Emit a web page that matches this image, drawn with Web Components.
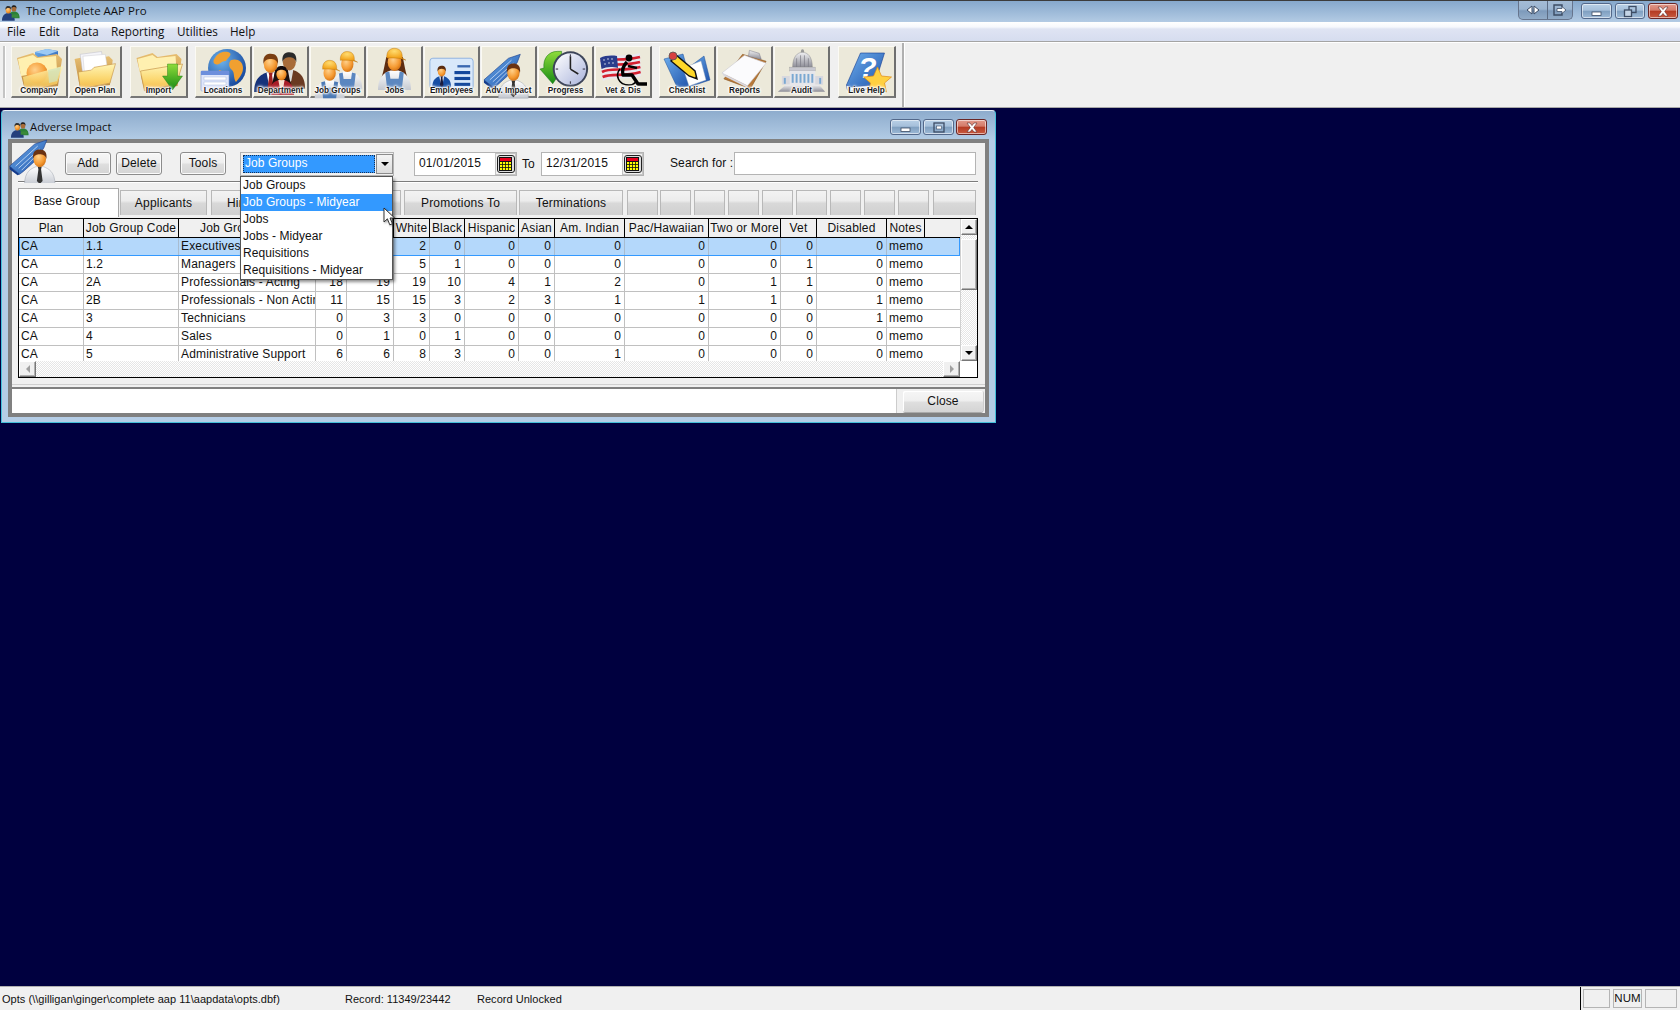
<!DOCTYPE html>
<html><head><meta charset="utf-8"><title>The Complete AAP Pro</title>
<style>
html,body{margin:0;padding:0;width:1680px;height:1010px;overflow:hidden;background:#000040}
body{display:flex;flex-direction:column;font:12px "Liberation Sans",Arial,sans-serif;color:#111}
</style></head><body>
<aap-titlebar></aap-titlebar>
<aap-menubar></aap-menubar>
<aap-toolbar>
  <tool-button label="Company" icon="company" style="width:57px;margin-left:11px"></tool-button>
  <tool-button label="Open Plan" icon="open" style="width:53px;margin-left:1px"></tool-button>
  <tool-button label="Import" icon="import" style="width:58px;margin-left:8px"></tool-button>
  <tool-button label="Locations" icon="locations" style="width:57px;margin-left:7px"></tool-button>
  <tool-button label="Department" icon="department" style="width:56px;margin-left:1px"></tool-button>
  <tool-button label="Job Groups" icon="jobgroups" style="width:56px;margin-left:1px"></tool-button>
  <tool-button label="Jobs" icon="jobs" style="width:56px;margin-left:1px"></tool-button>
  <tool-button label="Employees" icon="employees" style="width:56px;margin-left:1px"></tool-button>
  <tool-button label="Adv. Impact" icon="adv" style="width:56px;margin-left:1px"></tool-button>
  <tool-button label="Progress" icon="progress" style="width:56px;margin-left:1px"></tool-button>
  <tool-button label="Vet &amp; Dis" icon="vet" style="width:57px;margin-left:1px"></tool-button>
  <tool-button label="Checklist" icon="checklist" style="width:57px;margin-left:7px"></tool-button>
  <tool-button label="Reports" icon="reports" style="width:56px;margin-left:1px"></tool-button>
  <tool-button label="Audit" icon="audit" style="width:56px;margin-left:1px"></tool-button>
  <tool-button label="Live Help" icon="help" style="width:58px;margin-left:8px"></tool-button>
</aap-toolbar>
<aap-desktop>
  <aap-window></aap-window>
</aap-desktop>
<aap-statusbar></aap-statusbar>

<script>
const DEFS=`<defs>
<linearGradient id="y" x1="0" y1="0" x2="0" y2="1"><stop offset="0" stop-color="#fff6b8"/><stop offset=".6" stop-color="#fbd66e"/><stop offset="1" stop-color="#f2b84a"/></linearGradient>
<linearGradient id="t" x1="0" y1="0" x2="0" y2="1"><stop offset="0" stop-color="#e8bf72"/><stop offset="1" stop-color="#b98538"/></linearGradient>
<radialGradient id="s" cx=".4" cy=".35" r=".75"><stop offset="0" stop-color="#ffd08a"/><stop offset=".6" stop-color="#f59a32"/><stop offset="1" stop-color="#c8660c"/></radialGradient>
<radialGradient id="h" cx=".4" cy=".25" r=".9"><stop offset="0" stop-color="#ffdc70"/><stop offset=".6" stop-color="#f3a51e"/><stop offset="1" stop-color="#c97808"/></radialGradient>
<linearGradient id="b" x1="0" y1="0" x2="1" y2="1"><stop offset="0" stop-color="#6fb0ee"/><stop offset="1" stop-color="#1c4fa8"/></linearGradient>
<linearGradient id="g" x1="0" y1="0" x2="0" y2="1"><stop offset="0" stop-color="#8fdc3a"/><stop offset="1" stop-color="#168a14"/></linearGradient>
<radialGradient id="w" cx=".35" cy=".3" r=".8"><stop offset="0" stop-color="#6eb4ec"/><stop offset="1" stop-color="#0f3f96"/></radialGradient>
<linearGradient id="m" x1="0" y1="0" x2="0" y2="1"><stop offset="0" stop-color="#f0f0f2"/><stop offset="1" stop-color="#8e8e98"/></linearGradient>
<linearGradient id="c" x1="0" y1="0" x2="1" y2="1"><stop offset="0" stop-color="#ffffff"/><stop offset="1" stop-color="#aab4dc"/></linearGradient>
<linearGradient id="w2" x1="0" y1="0" x2="0" y2="1"><stop offset="0" stop-color="#fff"/><stop offset="1" stop-color="#c4c8d0"/></linearGradient>
</defs>`;
function folder(){return `<path d="M6 12 L22 7 L27 11 L46 8 L51 13 L47 40 L14 45 Z" fill="url(#t)"/>
<path d="M7 13 L22 9 L26 12 L45 10 L46 24 L10 30 Z" fill="#fff0b0"/>`}
function front(){return `<path d="M10 25 L52 18 L46 38 L14 45 Z" fill="url(#y)" stroke="#c8964a" stroke-width=".7"/>`}
function bust(x,y,sc,o){
 const skin=o.skin||'url(#s)';
 let r=`<g transform="translate(${x} ${y}) scale(${sc})">`;
 if(o.long) r+=`<path d="M-8 -4 C-10 6 -11 12 -13 17 L13 17 C11 12 10 6 8 -4 Z" fill="${o.long}"/>`;
 r+=`<path d="M-16 28 C-16 14 -9 11 -4 9 L4 9 C9 11 16 14 16 28 Z" fill="${o.body}" stroke="${o.edge||'none'}" stroke-width=".5"/>`;
 if(o.straps) r+=`<path d="M-9 11 L-7 28 L7 28 L9 11 L5 10 L4 17 L-4 17 L-5 10 Z" fill="${o.straps}"/>`;
 if(o.shirt) r+=`<path d="M-4 9 L4 9 L2 20 L0 22 L-2 20 Z" fill="${o.shirt}"/>`;
 if(o.tie) r+=`<path d="M-2 9 L2 9 L1.4 12 L3 24 L0 27 L-3 24 L-1.4 12 Z" fill="${o.tie}"/>`;
 r+=`<ellipse cx="0" cy="1" rx="6.6" ry="8.4" fill="${skin}"/>`;
 if(o.hair) r+=`<path d="M-7 1 C-8 -8 -3 -9 0 -9 C5 -9 8 -6 7 1 C6 -3 3 -4 0 -4 C-3 -4 -6 -3 -7 1 Z" fill="${o.hair}"/>`;
 if(o.hat) r+=`<path d="M-7.5 -3 C-8 -11 -3 -12.5 0 -12.5 C5 -12.5 8 -9 7.5 -3 L11 -1 C6 -3.4 -4 -3.4 -7.5 -3 Z" fill="url(#h)" stroke="#b46e08" stroke-width=".4"/>`;
 return r+`</g>`;
}
const ICONS={
company:()=>`<path d="M24 6 L36 3 L47 5 L47 20 L36 24 L24 20 Z" fill="url(#b)"/><path d="M24 6 L36 9 L47 5 L36 3 Z" fill="#9ccaf5"/>`+folder()+`<circle cx="26" cy="27" r="10.5" fill="url(#s)" opacity=".95"/><path d="M12 31 L52 20 L46 38 L14 45 Z" fill="url(#y)" opacity=".82"/><path d="M37 24 L50 21 L46 35 L38 37 Z" fill="#cfe4c0" opacity=".7"/>`,
open:()=>`<path d="M6 12 L20 9 L24 12 L43 9 L47 13 L44 40 L12 44 Z" fill="url(#t)"/><path d="M12 7 L35 4 L38 26 L15 30 Z" fill="#f4f4f8" stroke="#b8b8c4" stroke-width=".5"/><path d="M15 9 L39 7 L42 26 L17 31 Z" fill="#fff" stroke="#c8c8d0" stroke-width=".5"/><path d="M10 26 L24 24 L27 21 L50 17 L44 38 L12 44 Z" fill="url(#y)" stroke="#c8964a" stroke-width=".7"/>`,
import:()=>folder()+front()+`<path d="M37 18 L47 18 L47 30 L52 30 L42 44 L32 30 L37 30 Z" fill="url(#g)" stroke="#146f12" stroke-width=".4"/>`,
locations:()=>`<circle cx="32" cy="22" r="19" fill="url(#w)"/><path d="M20 12 C24 5 32 5 35 7 C37 10 32 12 31 15 C27 14 24 20 20 18 C18 17 18 14 20 12 Z M36 14 C42 12 48 15 48 22 C48 28 44 32 41 36 C38 32 40 27 37 24 C34 22 33 17 36 14 Z" fill="#f0a030"/><path d="M24 24 C27 24 30 28 29 31 L23 30 Z" fill="#f0a030"/><rect x="6" y="25" width="28" height="20" rx="1" fill="#dfe6fa" stroke="#7c96cc" stroke-width=".6"/><rect x="6" y="25" width="28" height="4" fill="#6d8fdc"/><rect x="9" y="31" width="22" height="3" fill="#fff" stroke="#9fb0d6" stroke-width=".4"/><rect x="9" y="36" width="22" height="3" fill="#fff" stroke="#9fb0d6" stroke-width=".4"/>`,
department:()=>bust(37,15,1,{skin:'#a86c38',hair:'#2a2a2a',body:'#6a3a22',shirt:'#ddd'})+bust(18,17,1.05,{hair:'#7a3e12',body:'#16327a',shirt:'#fff',tie:'#a02020'})+bust(29,27,.8,{long:'#1a1010',hair:'#120a0a',body:'#a81c28',shirt:'#f6e0d0'}),
jobgroups:()=>bust(38,17,.95,{hat:1,body:'url(#w2)',straps:'#5a86c0'})+bust(20,26,.95,{hat:1,body:'url(#w2)',straps:'#4a78b4'}),
jobs:()=>bust(28,15,1.05,{long:'#5e2c10',hat:1,body:'url(#w2)',straps:'#5c88c0'}),
employees:()=>`<rect x="6" y="12" width="44" height="32" rx="3" fill="#d8e8fa" stroke="#90b4e0" stroke-width="1"/><rect x="34" y="19" width="13" height="2.4" fill="#3a68b0"/><rect x="31" y="25" width="16" height="3.2" fill="#14489c"/><rect x="31" y="31" width="16" height="3.2" fill="#14489c"/><rect x="31" y="37" width="16" height="3.2" fill="#14489c"/>`+bust(18,25,.6,{hair:'#5a2c10',body:'#164ea4',shirt:'#fff',tie:'#1a1a3c'}),
adv:()=>`<path d="M3 34 L28 12 L40 8 L37 16 L27 30 L17 39 L13 42 Z" fill="url(#b)" stroke="#1a3c88" stroke-width=".6"/><path d="M9 34 L31 14 M12 36 L33 17 M15 38 L35 18" stroke="#cfe2fa" stroke-width=".8"/><path d="M3 34 L13 42 L11 43 L3 37 Z" fill="#123a8c"/>`+bust(33,26,.95,{hair:'#6a3212',body:'url(#w2)',edge:'#9aa0aa',tie:'#333'}),
progress:()=>`<path d="M20 5 C10 5 5 13 6 22 L2 23 L15 38 L25 23 L18 22 C17 17 20 13 24 12 L24 5 Z" fill="url(#g)" stroke="#0f7010" stroke-width=".5"/><circle cx="33" cy="23" r="18" fill="#3c4458"/><circle cx="33" cy="23" r="16" fill="url(#c)"/><path d="M33 23 L33 10 M33 23 L41 28" stroke="#222" stroke-width="1.6" fill="none"/><g fill="#445"><rect x="32.4" y="8" width="1.2" height="2.5"/><rect x="32.4" y="35.5" width="1.2" height="2.5"/><rect x="18" y="22.4" width="2.5" height="1.2"/><rect x="45.5" y="22.4" width="2.5" height="1.2"/></g>`,
vet:()=>`<path d="M5 12 C15 7 25 12 45 7 L46 30 C30 35 17 30 8 35 Z" fill="#e8e8f0"/><g stroke="#d42030" stroke-width="2.7" fill="none"><path d="M6 16 C16 11 26 16 45 11"/><path d="M6.6 21 C16 16 26 21 45 16"/><path d="M7 26 C16 21 27 26 45.4 21"/><path d="M7.6 31 C17 27 28 31 45.6 26"/></g><path d="M5 12 C10 9.5 16 9 22 10 L23 22 C16 20 11 21 6.5 23 Z" fill="#2a3c8c"/><g fill="#fff"><circle cx="9" cy="14" r=".7"/><circle cx="13" cy="13" r=".7"/><circle cx="17" cy="13" r=".7"/><circle cx="10" cy="18" r=".7"/><circle cx="14" cy="17" r=".7"/><circle cx="18" cy="17" r=".7"/></g><circle cx="34" cy="12" r="3.4" fill="#000"/><path d="M32 16 C28 20 27 25 28 29 L37 29 L43 38 L52 38" stroke="#000" stroke-width="3.4" fill="none" stroke-linejoin="round"/><path d="M33 20 L42 22" stroke="#000" stroke-width="2.4"/><path d="M25 23 C20 29 23 39 34 39 C37 39 39 38 41 36" stroke="#000" stroke-width="1.6" fill="none"/>`,
checklist:()=>`<path d="M5 13 L24 8 L33 40 L18 41 Z" fill="url(#b)" stroke="#1a4c98" stroke-width=".5"/><path d="M25 25 L45 10 L51 34 L33 40 Z" fill="url(#b)" stroke="#1a4c98" stroke-width=".5"/><path d="M24 22 L42 15 L47 34 L30 40 Z" fill="#fff" stroke="#9ab" stroke-width=".4"/><path d="M12 15 L17 9 L36 25 L38 33 L30 30 Z" fill="#ffd828" stroke="#111" stroke-width="1.4"/><circle cx="14" cy="10" r="4" fill="#d84040" stroke="#555" stroke-width=".8"/><path d="M36 32 L38 33 L37 30 Z" fill="#111"/>`,
reports:()=>`<path d="M26 8 L50 15 L34 43 L7 33 Z" fill="#b87838" stroke="#7c4a18" stroke-width=".5"/><path d="M5 27 L28 9 L50 17 L31 40 Z" fill="#fbfbfd" stroke="#c8c8d0" stroke-width=".6"/><path d="M7 30 L31 42 L31 40 L5 27 Z" fill="#d8d8e0"/><path d="M33 4 L43 7 L45 13 L32 10 Z" fill="url(#m)" stroke="#778" stroke-width=".5"/>`,
audit:()=>`<ellipse cx="29" cy="5" rx="1.6" ry="2.2" fill="#999"/><path d="M19 21 C19 10 24 6 29 6 C34 6 39 10 39 21 Z" fill="url(#m)" stroke="#777" stroke-width=".4"/><path d="M23 21 L23 12 M27 21 L27 9 M31 21 L31 9 M35 21 L35 12" stroke="#7a7a84" stroke-width=".7"/><rect x="16" y="21" width="26" height="4" fill="#c8c8d0" stroke="#888" stroke-width=".3"/><path d="M8 30 L50 30 L50 39 L8 39 Z" fill="#d8d8de"/><rect x="16" y="25" width="26" height="14" fill="#e6e6ea"/><g fill="#7aa8d2"><rect x="18" y="28" width="2" height="9"/><rect x="22" y="28" width="2" height="9"/><rect x="26" y="28" width="2" height="9"/><rect x="30" y="28" width="2" height="9"/><rect x="34" y="28" width="2" height="9"/><rect x="38" y="28" width="2" height="9"/><rect x="10" y="32" width="2" height="6"/><rect x="46" y="32" width="2" height="6"/></g><path d="M4 46 L12 39 L46 39 L52 46 Z" fill="url(#m)"/>`,
help:()=>`<path d="M8 39 L22 7 L46 7 L35 42 L12 45 Z" fill="url(#b)" stroke="#143c90" stroke-width=".6"/><path d="M8 39 C8 44 10 46 12 45 L35 42 L36 39 L12 41 Z" fill="#eef2fa" stroke="#143c90" stroke-width=".5"/><text x="29" y="32" font-family="Liberation Sans" font-style="italic" font-weight="700" font-size="30" fill="#fff" text-anchor="middle">?</text><path d="M39 21 L43 30 L53 31 L46 37 L48 46 L39 42 L30 46 L32 37 L25 31 L35 30 Z" fill="#ffd040" stroke="#e08a14" stroke-width=".7"/>`,
small:()=>bust(37,16,1.05,{skin:'#a86c38',hair:'#222',body:'#2a8038'})+bust(20,20,1.2,{hair:'#333',body:'#24407c'})+`<rect x="30" y="34" width="20" height="10" fill="#3a8a3a"/>`
};

function define(name,css,html,init){
  const t=document.createElement('template');
  t.innerHTML=`<style>${css}</style>${html}`;
  customElements.define(name,class extends HTMLElement{
    constructor(){super();this.attachShadow({mode:'open'}).appendChild(t.content.cloneNode(true));}
    connectedCallback(){if(init&&!this._d){this._d=1;init.call(this,this.shadowRoot);}}
  });
}

define('aap-icon',`:host{display:block;width:100%;height:100%}svg{display:block;width:100%;height:100%;overflow:visible}`,``,function(r){
  const n=this.getAttribute('name');const vb=this.getAttribute('vb')||'0 0 57 52';
  if(!ICONS[n])return;
  r.innerHTML+=`<svg viewBox="${vb}" xmlns="http://www.w3.org/2000/svg">${DEFS}${ICONS[n]()}</svg>`;
});

define('win-button',`:host{display:block;flex:none;width:31px;height:16px;box-sizing:border-box;border:1px solid #53688a;border-radius:3px;box-shadow:inset 0 0 0 1px rgba(255,255,255,.55);background:linear-gradient(#b9d0e7 0,#a5bfda 45%,#7f9fc0 50%,#9db9d6 100%);display:flex;align-items:center;justify-content:center}
:host([kind=close]){border-color:#6a2626;background:linear-gradient(#e29a8c 0,#d37a68 45%,#b43a22 50%,#c85a40 100%)}
svg{display:block}`,``,function(r){
  const k=this.getAttribute('kind');
  const g={min:`<rect x="5" y="7" width="9" height="3.4" fill="#fff" stroke="#3c4c64" stroke-width=".8"/>`,
  max:`<rect x="5" y="2" width="10" height="9" fill="none" stroke="#3c4c64" stroke-width="1.3"/><rect x="7.5" y="5" width="5" height="3" fill="#fff" stroke="#3c4c64" stroke-width=".6"/>`,
  restore:`<rect x="9" y="1.5" width="7" height="6" fill="none" stroke="#3c4c64" stroke-width="1.3"/><rect x="4.5" y="5" width="7" height="6.5" fill="#c4d4e6" stroke="#3c4c64" stroke-width="1.3"/>`,
  close:`<path d="M5 2 L8 2 L10 4.6 L12 2 L15 2 L11.7 6.5 L15 11 L12 11 L10 8.4 L8 11 L5 11 L8.3 6.5 Z" fill="#fff" stroke="#5a2a2a" stroke-width=".6"/>`}[k];
  r.innerHTML+=`<svg width="20" height="13" viewBox="0 0 20 13">${g}</svg>`;
});

define('aap-titlebar',`:host{display:flex;height:22px;box-sizing:border-box;border-top:1px solid #3c3c3c;align-items:flex-start;background:linear-gradient(#86a8cc,#b3cbe4);flex:none}
.ic{width:16px;height:14px;margin:3px 0 0 3px}
.t{font:11.5px "Open Sans",sans-serif;margin:1px 0 0 7px;color:#111;line-height:17px;flex:1}
.g{display:flex;width:55px;height:19px;box-sizing:border-box;border:1px solid #66748c;border-top:0;border-radius:0 0 5px 5px;background:linear-gradient(#a4bcd6 0,#9cb5d0 45%,#7d9abb 55%,#92acc8);margin-right:8px}
.g div{flex:1;display:flex;align-items:center;justify-content:center}.g div:first-child{flex:0 0 28px}.g div+div{border-left:1px solid #5c6c84}
.w{display:flex;gap:3px;margin:2px 2px 0 0}`,
`<div class="ic"><aap-icon name="small" vb="4 4 48 40"></aap-icon></div><div class="t">The Complete AAP Pro</div>
<div class="g"><div><svg width="14" height="10"><path d="M6 1 L1 5 L6 9 Z" fill="#fff" stroke="#3c4c64"/><path d="M8 1 L13 5 L8 9 Z" fill="#fff" stroke="#3c4c64"/></svg></div><div><svg width="14" height="12"><path d="M9 3 V1 H1 V11 H9 V9" fill="none" stroke="#3c4c64" stroke-width="1.4"/><path d="M4 4.5 H9 V2.6 L13 6 L9 9.4 V7.5 H4 Z" fill="#fff" stroke="#3c4c64" stroke-width=".8"/></svg></div></div>
<div class="w"><win-button kind="min"></win-button><win-button kind="restore" style="width:30px"></win-button><win-button kind="close" style="width:30px"></win-button></div>`);

define('aap-menubar',`:host{display:flex;height:20px;box-sizing:border-box;border-bottom:1px solid #a4a4a4;padding:0 0 0 7px;align-items:center;background:linear-gradient(#fff 0,#f6f8fc 5px,#dfe4f3 7px,#d6ddef 100%);flex:none;font:11.7px "Open Sans",sans-serif;color:#111}
span{display:block;line-height:16px;padding-bottom:1px}`,
`<span style="width:32px">File</span><span style="width:34px">Edit</span><span style="width:38px">Data</span><span style="width:66px">Reporting</span><span style="width:53px">Utilities</span><span>Help</span>`);

define('aap-toolbar',`:host{display:block;flex:none;height:66px;box-sizing:border-box;background:#f0f0f0;border-top:1px solid #fff;border-bottom:1px solid #a8a8a8}
.box{position:relative;display:flex;width:904px;height:64px;box-sizing:border-box;border-right:2px solid #b0b0b0;padding-top:3px;align-items:flex-start;box-shadow:1px 0 0 #fff}
.grip{position:absolute;left:3px;top:3px;width:2px;height:52px;background:#c4c4c4;border-right:1px solid #fff}`,
`<div class="box"><div class="grip"></div><slot></slot></div>`);

define('tool-button',`:host{display:grid;flex:none;height:52px;box-sizing:border-box;background:#ece9da;border-top:1px solid #fbfaf4;border-left:1px solid #fbfaf4;border-right:2px solid #6f6f6f;border-bottom:2px solid #777;grid-template-columns:minmax(0,1fr);grid-template-rows:minmax(0,1fr)}
aap-icon,.l{grid-area:1/1}
aap-icon{margin:-1px -2px -2px -1px;width:auto;height:auto;min-height:0}
.l{align-self:end;justify-self:center;font:700 8.2px/11px "Liberation Sans",sans-serif;color:#1a1a1a;white-space:nowrap;text-shadow:0 0 1px #fff,0 0 2px #fff,0 0 2px #fff,0 0 3px #fff,0 0 3px #fff,0 0 4px #fff;position:relative}`,
`<div class="l"></div>`,function(r){
  const i=document.createElement('aap-icon');
  i.setAttribute('name',this.getAttribute('icon'));
  r.insertBefore(i,r.querySelector('.l'));
  r.querySelector('.l').textContent=this.getAttribute('label');
});

define('aap-desktop',`:host{display:block;flex:1;position:relative;background:#00003f;min-height:0}`,`<slot></slot>`);

define('push-button',`:host{display:flex;flex:none;width:46px;height:23px;box-sizing:border-box;border:1px solid #8c8c8c;border-radius:3px;align-items:center;justify-content:center;padding-bottom:2px;background:linear-gradient(#f6f6f6 0,#efefef 45%,#dedede 55%,#d4d4d4 100%);box-shadow:inset 0 0 0 1px #fbfbfb;font:12px "Liberation Sans",sans-serif;letter-spacing:.12px;color:#111}`,`<slot></slot>`);

define('combo-box',`:host{display:block;flex:none;position:relative;z-index:5;width:154px;height:24px;box-sizing:border-box;border:1px solid #b4b4b4;background:#f0f0f0;font:12px "Liberation Sans",sans-serif;letter-spacing:.06px}
.f{position:absolute;left:2px;top:2px;width:132px;height:18px;box-sizing:border-box;background:#3399ff;border:1px dotted #10305a;color:#fff;line-height:15px;padding-left:1px}
.a{position:absolute;left:135px;top:1px;width:17px;height:20px;box-sizing:border-box;border:1px solid #8c8c8c;background:linear-gradient(#f4f4f4,#dcdcdc);display:flex;align-items:center;justify-content:center}
.a i{display:block;width:0;height:0;border:4px solid transparent;border-top:4px solid #000;border-bottom:0}
.d{position:absolute;left:-1px;top:23px;width:153px;height:103px;box-sizing:border-box;border:1px solid #555;border-bottom:0;background:#fff;box-shadow:0 1px 0 #555,2px 3px 3px rgba(0,0,0,.45)}
.d div{height:17px;line-height:17px;padding-left:2px;color:#111;white-space:nowrap}
.d .s{background:#3399ff;color:#fff}
.c{position:absolute;left:142px;top:54px;width:14px;height:20px;z-index:2;filter:drop-shadow(1px 1px 1px rgba(0,0,0,.4))}`,
`<div class="f">Job Groups</div><div class="a"><i></i></div>
<div class="d"><div>Job Groups</div><div class="s">Job Groups - Midyear</div><div>Jobs</div><div>Jobs - Midyear</div><div>Requisitions</div><div>Requisitions - Midyear</div></div>
<svg class="c" viewBox="0 0 14 20"><path d="M1 1 L1 15 L4.4 11.8 L6.8 17.8 L9.4 16.7 L7 11 L11.6 11 Z" fill="#fff" stroke="#222" stroke-width=".9"/></svg>`);

define('date-field',`:host{display:flex;flex:none;width:103px;height:24px;box-sizing:border-box;border:1px solid #b4b4b4;background:#f0f0f0;font:12px "Liberation Sans",sans-serif;letter-spacing:.2px}
.v{flex:1;background:#fff;line-height:20px;padding-left:4px}
.b{width:21px;display:flex;align-items:center;justify-content:center;box-shadow:inset 0 0 0 1px #c4c4c4}
.b div{width:18px;height:18px;box-sizing:border-box;border:1px solid #222;border-radius:3px;display:flex;align-items:center;justify-content:center;background:#ddd}
svg{display:block}`,
`<div class="v"><slot></slot></div><div class="b"><div><svg width="13" height="14" viewBox="0 0 13 14"><rect width="13" height="14" fill="#111"/><rect x="1" y="1" width="11" height="3" fill="#e8001c"/><rect x="1" y="5" width="11" height="8" fill="#ffff00"/><path d="M3.5 5 V13 M6.5 5 V13 M9.5 5 V13 M1 7.5 H12 M1 10.5 H12" stroke="#111" stroke-width=".8"/></svg></div></div>`);

define('tab-item',`:host{display:flex;flex:none;height:25px;margin-bottom:3px;box-sizing:border-box;border:1px solid #b8b8b8;border-bottom:0;align-items:center;justify-content:center;background:linear-gradient(#f3f3f3 0,#ececec 40%,#d8d8d8 52%,#d0d0d0 100%);font:12px "Liberation Sans",sans-serif;letter-spacing:.2px;color:#111;white-space:nowrap}
:host([active]){height:29px;margin-bottom:1px;background:#fff;border-color:#a8a8a8;padding:0 3px 5px 0}`,`<slot></slot>`);

const COLS=[65,95,137,31,47,36,35,54,36,70,84,72,36,70,38];
const HEAD=['Plan','Job Group Code','Job Group Name','','','White','Black','Hispanic','Asian','Am. Indian','Pac/Hawaiian','Two or More','Vet','Disabled','Notes'];
const ROWS=[
['CA','1.1','Executives','','',2,0,0,0,0,0,0,0,0,'memo'],
['CA','1.2','Managers','','',5,1,0,0,0,0,0,1,0,'memo'],
['CA','2A','Professionals - Acting',18,19,19,10,4,1,2,0,1,1,0,'memo'],
['CA','2B','Professionals - Non Acting',11,15,15,3,2,3,1,1,1,0,1,'memo'],
['CA','3','Technicians',0,3,3,0,0,0,0,0,0,0,1,'memo'],
['CA','4','Sales',0,1,0,1,0,0,0,0,0,0,0,'memo'],
['CA','5','Administrative Support',6,6,8,3,0,0,1,0,0,0,0,'memo']];
define('data-grid',`:host{display:grid;grid-template-columns:941px 17px;grid-template-rows:142px 16px;width:960px;height:160px;box-sizing:border-box;border:1px solid #000;font:12px "Liberation Sans",sans-serif;letter-spacing:.17px;color:#111;background:#fff;flex:none}
.body{overflow:hidden;background:#fff}
.r{display:grid;grid-template-columns:${COLS.map(c=>c+'px').join(' ')};box-sizing:border-box;height:18px;border-bottom:1px solid #c0c0c0;line-height:17px}
.r div{box-sizing:border-box;border-right:1px solid #c0c0c0;padding:0 3px 0 2px;overflow:hidden;white-space:nowrap}
.r div.n{text-align:right}.r div:last-child{border-right:0}
.r div.m{padding-left:2px;padding-right:0}
.hd{height:19px;background:#f0f0f0;border-bottom:1px solid #000;line-height:18px}
.hd div{border-right:1px solid #000;text-align:center;padding:0;background:#f0f0f0}
.hd div:last-child{border-right:1px solid #000}
.sel{background:#b4d8fb;border-bottom:1px solid #3399ff;box-shadow:inset 1px 0 0 #3399ff,inset -1px 0 0 #3399ff}
.sel div{border-right-color:#a8bcd0}
.vs{background:repeating-conic-gradient(#e6e6e6 0 25%,#fff 0 50%) 0 0/2px 2px;display:flex;flex-direction:column;border-left:1px solid #d0d0d0;box-sizing:border-box}
.hs{background:repeating-conic-gradient(#e6e6e6 0 25%,#fff 0 50%) 0 0/2px 2px;display:flex;justify-content:space-between}
.btn{flex:none;box-sizing:border-box;background:#f0f0f0;border:1px solid;border-color:#fff #777 #777 #fff;box-shadow:inset -1px -1px 0 #b0b0b0;display:flex;align-items:center;justify-content:center}
.vs .btn{width:16px;height:16px}.hs .btn{width:17px;height:16px}
.th{flex:none;width:16px;height:51px;margin:4px 0 55px;box-sizing:border-box;background:#f0f0f0;border:1px solid;border-color:#fff #777 #777 #fff;box-shadow:inset -1px -1px 0 #b0b0b0}
.corner{background:#fff}
i{display:block;width:0;height:0;border:4px solid transparent}
.up{border-bottom:4px solid #000;border-top:0}.dn{border-top:4px solid #000;border-bottom:0}
.lf{border-right:4px solid #a0a0a0;border-left:0}.rt{border-left:4px solid #a0a0a0;border-right:0}`,
`<div class="body"></div>
<div class="vs"><div class="btn"><i class="up"></i></div><div class="th"></div><div class="btn"><i class="dn"></i></div></div>
<div class="hs"><div class="btn"><i class="lf"></i></div><div class="btn"><i class="rt"></i></div></div>
<div class="corner"></div>`,function(r){
  const b=r.querySelector('.body');
  let h=`<div class="r hd">${HEAD.map(x=>`<div>${x}</div>`).join('')}</div>`;
  ROWS.forEach((row,i)=>{
    h+=`<div class="r${i==0?' sel':''}">`+row.map((v,j)=>`<div class="${typeof v=='number'?'n':''}${j==14?' m':''}">${v}</div>`).join('')+`</div>`;
  });
  b.innerHTML=h;
});

define('aap-window',`:host{position:absolute;left:1px;top:2px;width:995px;height:313px;box-sizing:border-box;display:flex;flex-direction:column;border:1px solid #45c0da;border-top-color:#e8f0f8;border-radius:4px 4px 0 0;background:linear-gradient(#8eaccd 0,#b4cde6 30px,#b4cde6 100%);padding:0 6px 5px 6px}
.tb{flex:none;height:28px;display:flex;align-items:flex-start}
.ic{width:16px;height:14px;margin:10px 0 0 4px}
.t{flex:1;font:11.3px "Open Sans",sans-serif;margin:7px 0 0 2px;line-height:18px;color:#111}
.wb{display:flex;gap:2px;margin:8px 2px 0 0}
.in{flex:1;border:4px solid #808080;background:#f0f0f0;box-sizing:border-box;display:flex;flex-direction:column;font:12px "Liberation Sans",sans-serif;letter-spacing:.1px;color:#111;position:relative}
.row{display:flex;align-items:flex-start;padding:9px 0 0 53px;height:38px;box-sizing:border-box;flex:none}
.av{position:absolute;left:-4px;top:-6px;width:50px;height:46px;overflow:hidden;z-index:3}
.sep{margin:0 7px 0 6px;background:#7c7c7c;border-bottom:1px solid #fff;box-sizing:content-box;flex:none;height:1px}
.tabs{display:flex;align-items:flex-end;height:35px;box-sizing:border-box;padding-left:6px;flex:none}
.grid{padding-left:6px;flex:none}
.lbl{line-height:22px;flex:none}
.rule{flex:none;height:5px;margin-top:6px;border-top:1px solid #d0d0d0;border-bottom:2px solid #808080;box-sizing:border-box}
.ft{flex:1;display:flex;align-items:flex-start}
.inp{flex:none;background:#fff;border:0;border-right:1px solid #ccc;width:885px;height:24px;box-sizing:border-box}
.cl{width:80px;height:21px;margin:2px 0 0 6px;border:0;border-radius:2px;box-shadow:inset 1px 1px 0 #fff,0 1px 0 #aaa,1px 0 0 #ccc}
.s{flex:none;width:242px;height:23px;background:#fff;border:1px solid #b4b4b4;box-sizing:border-box}`,
`<div class="tb"><div class="ic"><aap-icon name="small" vb="4 4 48 40"></aap-icon></div><div class="t">Adverse Impact</div>
<div class="wb"><win-button kind="min"></win-button><win-button kind="max"></win-button><win-button kind="close"></win-button></div></div>
<div class="in">
 <div class="av"><aap-icon name="adv" vb="2.5 5 47.6 45.7"></aap-icon></div>
 <div class="row">
  <push-button>Add</push-button>
  <push-button style="margin-left:5px">Delete</push-button>
  <push-button style="margin-left:18px">Tools</push-button>
  <combo-box style="margin-left:14px"></combo-box>
  <date-field style="margin-left:20px">01/01/2015</date-field>
  <div class="lbl" style="margin-left:5px;width:19px;padding-top:1px">To</div>
  <date-field>12/31/2015</date-field>
  <div class="lbl" style="margin-left:26px;width:64px;white-space:nowrap">Search for :</div>
  <div class="s"></div>
 </div>
 <div class="sep"></div>
 <div class="tabs">
  <tab-item active style="width:101px">Base Group</tab-item>
  <tab-item style="width:87px;margin-left:1px">Applicants</tab-item>
  <tab-item style="width:61px;margin-left:4px">Hires</tab-item>
  <tab-item style="width:127px;margin-left:2px"></tab-item>
  <tab-item style="width:113px;margin-left:3px">Promotions To</tab-item>
  <tab-item style="width:104px;margin-left:2px">Terminations</tab-item>
  <tab-item style="width:31px;margin-left:4px"></tab-item>
  <tab-item style="width:31px;margin-left:2px"></tab-item>
  <tab-item style="width:31px;margin-left:3px"></tab-item>
  <tab-item style="width:31px;margin-left:3px"></tab-item>
  <tab-item style="width:31px;margin-left:3px"></tab-item>
  <tab-item style="width:31px;margin-left:3px"></tab-item>
  <tab-item style="width:31px;margin-left:3px"></tab-item>
  <tab-item style="width:31px;margin-left:3px"></tab-item>
  <tab-item style="width:31px;margin-left:3px"></tab-item>
  <tab-item style="width:43px;margin-left:4px"></tab-item>
 </div>
 <div class="grid"><data-grid></data-grid></div>
 <div class="rule"></div>
 <div class="ft"><div class="inp"></div><push-button class="cl">Close</push-button></div>
</div>`);

define('aap-statusbar',`:host{display:flex;flex:none;height:24px;box-sizing:border-box;border-top:1px solid #b0b0b0;background:#f0f0f0;font:11px "Liberation Sans",sans-serif;letter-spacing:.03px;color:#111;align-items:center}
span{display:block;white-space:nowrap;padding-top:1px}
.p{box-sizing:border-box;height:19px;border:1px solid #b4b4b4;margin-left:3px;flex:none;text-align:center;line-height:17px;font-size:11.5px}`,
`<span style="width:343px;padding-left:2px">Opts (\\\\gilligan\\ginger\\complete aap 11\\aapdata\\opts.dbf)</span>
<span style="width:132px">Record: 11349/23442</span>
<span style="width:1103px">Record Unlocked</span>
<div style="width:1px;height:23px;background:#000;flex:none"></div>
<div class="p" style="width:27px;margin-left:2px"></div><div class="p" style="width:29px">NUM</div><div class="p" style="width:32px"></div>`);
</script>
</body></html>
